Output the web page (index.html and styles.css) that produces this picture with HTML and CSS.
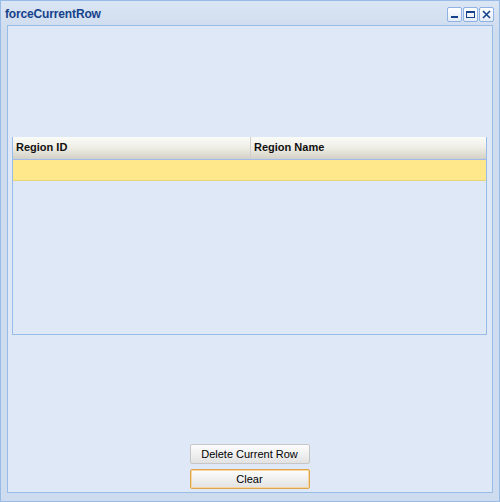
FILE: index.html
```html
<!DOCTYPE html>
<html>
<head>
<meta charset="utf-8">
<link rel="stylesheet" href="styles.css">
</head>
<body>
<div class="window">
  <div class="titlebar">
    <span class="title">forceCurrentRow</span>
    <div class="tools">
      <span class="tool"><svg width="13" height="13" viewBox="0 0 13 13"><rect x="3" y="8" width="7" height="2" fill="#15428b"/></svg></span>
      <span class="tool"><svg width="13" height="13" viewBox="0 0 13 13"><rect x="2.5" y="3.5" width="8" height="6" fill="none" stroke="#15428b" stroke-width="1"/><rect x="2.5" y="3" width="8" height="2" fill="#15428b"/></svg></span>
      <span class="tool"><svg width="13" height="13" viewBox="0 0 13 13"><path d="M3 3 L10 10 M10 3 L3 10" stroke="#15428b" stroke-width="1.6"/></svg></span>
    </div>
  </div>
  <div class="body">
    <div class="grid">
      <div class="grid-header">
        <div class="hcell first">Region ID</div>
        <div class="hcell">Region Name</div>
      </div>
      <div class="grid-rows">
        <div class="row selected"></div>
      </div>
    </div>
    <div class="spacer"></div>
    <div class="buttons">
      <button class="btn">Delete Current Row</button>
      <button class="btn focused">Clear</button>
    </div>
  </div>
</div>
</body>
</html>
```
FILE: styles.css
```css
html, body {
  margin: 0;
  padding: 0;
  background: #ffffff;
}
.window {
  box-sizing: border-box;
  width: 500px;
  height: 502px;
  border: 1px solid #99bbe8;
  background: linear-gradient(#dae6f4, #cfdcee 30px, #cddcef);
  display: flex;
  flex-direction: column;
  padding: 0 6px 8px 6px;
}
.titlebar {
  height: 24px;
  display: flex;
  align-items: center;
  justify-content: space-between;
  flex: none;
}
.title {
  font-family: "Liberation Sans", Arial, sans-serif;
  font-weight: bold;
  font-size: 12px;
  color: #15428b;
  margin-left: -2px;
  padding-top: 1px;
  letter-spacing: -0.15px;
}
.tools {
  display: flex;
  gap: 1px;
  margin-right: -1px;
  padding-top: 3px;
}
.tool {
  box-sizing: border-box;
  width: 15px;
  height: 15px;
  border: 1px solid #8db2e3;
  border-radius: 2px;
  background: linear-gradient(#ffffff, #e4ecf7);
  display: flex;
  align-items: center;
  justify-content: center;
}
.tool svg { display: block; }
.body {
  flex: 1;
  border: 1px solid #99bbe8;
  background: #dfe8f6;
  display: flex;
  flex-direction: column;
  padding: 0 5px 3px 4px;
}
.grid {
  margin-top: 111px;
  height: 198px;
  box-sizing: border-box;
  border: 1px solid #99bbe8;
  border-top: none;
  display: flex;
  flex-direction: column;
}
.grid-header {
  display: flex;
  height: 21px;
  background: linear-gradient(#fbfbf8, #efeee6 50%, #d6d4c8);
  border-bottom: 1px solid #d0d0d0;
  flex: none;
}
.hcell {
  font-family: "Liberation Sans", Arial, sans-serif;
  font-weight: bold;
  font-size: 11px;
  color: #111;
  line-height: 21px;
  padding-left: 3px;
  flex: 1;
}
.hcell.first {
  flex: none;
  width: 234px;
  border-right: 1px solid #d0d0d0;
}
.grid-rows {
  flex: 1;
  background: #dfe8f6;
}
.row.selected {
  height: 20px;
  background: #ffe88b;
  border-top: 1px solid #a3bae9;
  border-bottom: 1px solid #e8d57a;
}
.spacer { flex: 1; }
.buttons {
  display: flex;
  flex-direction: column;
  align-items: center;
  gap: 5px;
}
.btn {
  box-sizing: border-box;
  width: 120px;
  height: 20px;
  border: 1px solid #c6c6c6;
  border-radius: 2px;
  background: linear-gradient(#fdfdfd, #f0f0f0 50%, #e2e2e2);
  font-family: "Liberation Sans", Arial, sans-serif;
  font-size: 11px;
  color: #000;
  padding: 0;
}
.btn.focused {
  border: 1px solid #e0a44a;
  box-shadow: inset 0 0 0 1px #f6d7a4;
}
```
